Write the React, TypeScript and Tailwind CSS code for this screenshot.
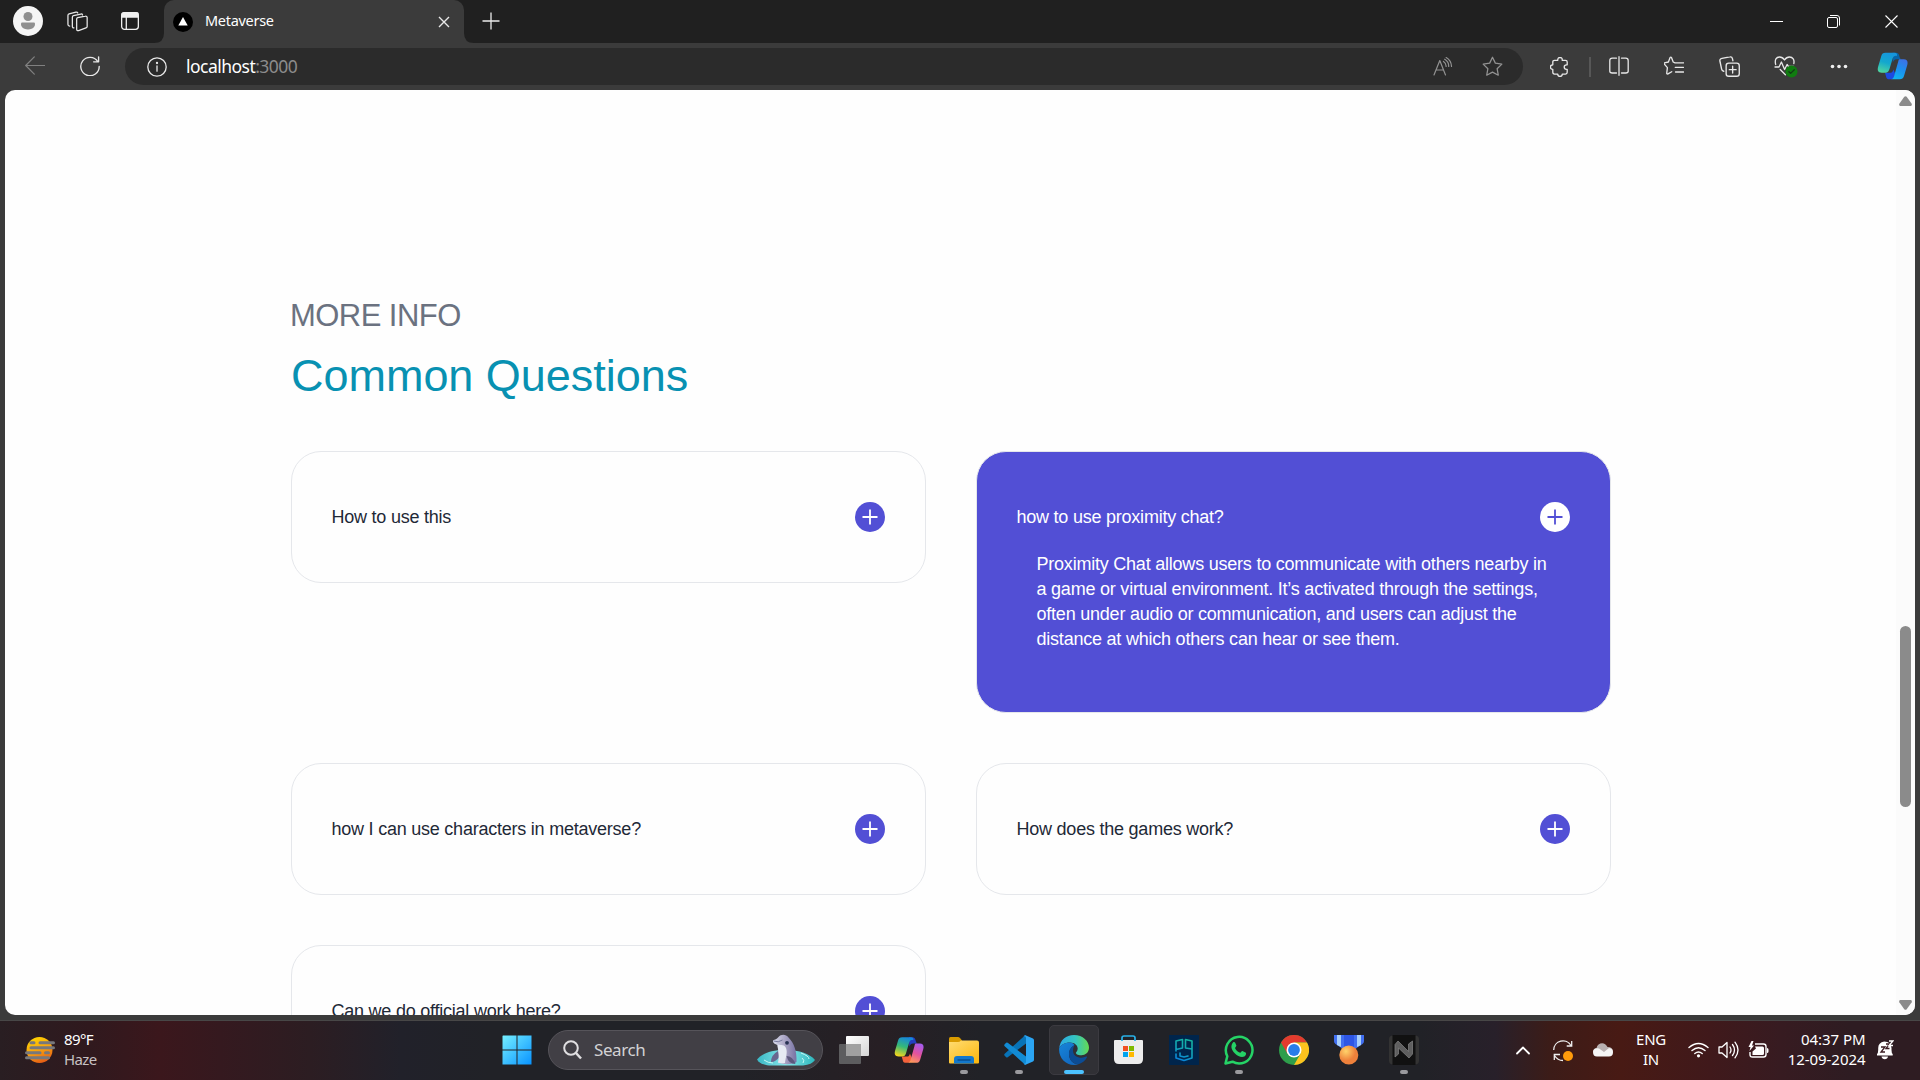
import type { ReactNode } from "react";

const faqs = [
  { question: "How to use this" },
  {
    question: "how to use proximity chat?",
    answer: [
      "Proximity Chat allows users to communicate with others nearby in",
      "a game or virtual environment. It’s activated through the settings,",
      "often under audio or communication, and users can adjust the",
      "distance at which others can hear or see them.",
    ],
  },
  { question: "how I can use characters in metaverse?" },
  { question: "How does the games work?" },
  { question: "Can we do official work here?" },
];

function Stroke({ size = 20, width = 1.3, children, className = "text-[#e8e8e8]" }: { size?: number; width?: number; children: ReactNode; className?: string }) {
  return (
    <svg width={size} height={size} viewBox="0 0 20 20" fill="none" stroke="currentColor" strokeWidth={width} strokeLinecap="round" strokeLinejoin="round" className={className}>
      {children}
    </svg>
  );
}

function TitleBar() {
  return (
    <header className="flex h-[43px] shrink-0 items-center bg-[#202020]">
      <div className="ml-[13px] mb-px flex h-[30px] w-[30px] items-center justify-center rounded-full bg-[#f5f5f5]">
        <svg width="16" height="18" viewBox="0 0 16 18" fill="#8f8f8f">
          <circle cx="8" cy="4.5" r="4.5" />
          <path d="M2.3 10.5h11.4c.9 0 1.3.7 1.3 1.5 0 3.2-2.6 5.4-7 5.4S1 15.200 1 12c0-.8.4-1.500 1.300-1.500Z" />
        </svg>
      </div>
      <div className="ml-[24px] mb-px">
        <Stroke size={21} width={1.2}>
          <path d="M10.200 6.300 17.500 4.900c.9-.2 1.700.4 1.700 1.300v8.500c0 .7-.4 1.200-1.100 1.400L11 18.700c-1 .3-1.800-.3-1.800-1.300V7.700c0-.7.4-1.200 1-1.400Z" />
          <path d="M6.600 16.100c-1 .1-1.500-.5-1.500-1.300V5.900c0-.7.4-1.200 1.100-1.400l7-1.600c.8-.2 1.400.2 1.600.9" />
          <path d="M2.600 14.300C1.500 14.200.9 13.700.9 12.800V4.200c0-.7.4-1.200 1.100-1.400l6.500-1.700c.9-.2 1.500.1 1.800.8" />
        </Stroke>
      </div>
      <div className="ml-[33px] mb-px">
        <svg width="18" height="18" viewBox="0 0 18 18" fill="none" stroke="#f0f0f0" strokeWidth="1.300">
          <rect x=".65" y=".65" width="16.700" height="16.700" rx="2.800" />
          <path d="M1 1.800Q1 1 2 1h14q1 0 1 .8V5H1Z" fill="#f0f0f0" />
          <path d="M5.300 5v12" />
        </svg>
      </div>
      <div className="relative ml-[25px] flex h-[43px] w-[300px] items-center rounded-t-[10px] bg-[#3b3b3b]">
        <svg className="absolute bottom-0 -left-[10px]" width="10" height="10" fill="#3b3b3b"><path d="M10 0v10H0Q10 10 10 0Z" /></svg>
        <svg className="absolute -right-[10px] bottom-0" width="10" height="10" fill="#3b3b3b"><path d="M0 0v10h10Q0 10 0 0Z" /></svg>
        <svg className="ml-[9px]" width="20" height="20" viewBox="0 0 20 20"><circle cx="10" cy="10" r="10" fill="#000" /><path d="m10 5 4.700 8.400H5.300Z" fill="#fff" /></svg>
        <span className="mb-[2px] ml-[12px] text-[14.500px] tracking-[-0.300px] text-white">Metaverse</span>
        <svg className="ml-auto mr-[14px]" width="12" height="12" stroke="#e8e8e8" strokeWidth="1.400"><path d="m1 1 10 10M11 1 1 11" /></svg>
      </div>
      <svg className="mb-[2px] ml-[18px]" width="18" height="18" stroke="#ececec" strokeWidth="1.300"><path d="M9 .5v17M.5 9h17" /></svg>
      <div className="ml-auto flex items-center">
        <div className="flex w-[57px] justify-center"><div className="h-px w-[13px] bg-white" /></div>
        <div className="flex w-[57px] justify-center">
          <svg width="13" height="13" fill="none" stroke="#fff" strokeWidth="1"><rect x=".5" y="2.500" width="10" height="10" rx="1.500" /><path d="M3 .5h7q2.500 0 2.500 2.500v7.500" /></svg>
        </div>
        <div className="flex w-[58px] justify-center"><svg width="13" height="13" stroke="#fff" strokeWidth="1.100"><path d="m.5.5 12 12m0-12-12 12" /></svg></div>
      </div>
    </header>
  );
}

function ToolButton({ children }: { children: ReactNode }) {
  return <div className="flex w-[55px] shrink-0 items-center justify-center">{children}</div>;
}

function Toolbar() {
  return (
    <div className="flex h-[47px] shrink-0 items-center bg-[#3b3b3b]">
      <div className="mb-px ml-[7px] flex">
        <ToolButton><Stroke width={1.200} className="text-[#808080]"><path d="M19.500 9.500H.7M9.300.9.700 9.500l8.600 8.600" /></Stroke></ToolButton>
        <ToolButton>
          <Stroke size={20} width={1.350}><path d="M17.700 5.500A9.200 9.200 0 1 0 19.200 10.500M18.600.8v5h-5" /></Stroke>
        </ToolButton>
      </div>
      <div className="ml-[8px] flex h-[37px] w-[1398px] shrink-0 items-center rounded-full bg-[#2b2b2b]">
        <div className="ml-[22px]"><Stroke size={20} width={1.300}><circle cx="10" cy="10" r="9.200" /><path d="M10 9v5.200" /><circle cx="10" cy="6" r=".5" fill="currentColor" /></Stroke></div>
        <span className="ml-[19px] text-[17.500px] tracking-[-0.530px] text-white">localhost<span className="text-[#8c8c8c]">:3000</span></span>
        <div className="ml-auto mr-[20px] flex items-center gap-[29px]">
          <Stroke size={20} width={1.200} className="text-[#929292]"><path d="M1 18 6.800 3.500 12.500 18M3 13h7.600M10.500 4.400q2.800 1.900 2.600 5M11.700 2.200q4.200 2.500 4 7.200M13.200.6q5 2.800 5.300 8.800" /></Stroke>
          <Stroke size={21} width={1.200} className="text-[#929292]"><path d="m10 1.200 2.700 5.600 6.200.9-4.500 4.400 1.100 6.200-5.500-2.900-5.500 2.900 1.100-6.200L1.100 7.700l6.200-.9Z" /></Stroke>
        </div>
      </div>
      <div className="ml-[9px]">
        <ToolButton>
          <Stroke size={20} width={1.300}><path d="M4.500 3.300h3.300c-.2-1.900.8-2.800 2.200-2.800s2.500.9 2.200 2.800h3.300q1.700 0 1.700 1.700v2.800h-.7c-1.500 0-2.300 1-2.300 2.200s.8 2.300 2.300 2.300h.7v3q0 1.800-1.700 1.800h-3.200c0 1.500-.8 2.400-2.300 2.400s-2.300-.9-2.300-2.400H4.500q-1.700 0-1.700-1.800v-3H2.600C1 12.300.4 11.300.4 10s.8-2.200 2.400-2.200V5q0-1.700 1.700-1.700Z" /></Stroke>
        </ToolButton>
      </div>
      <div className="ml-[2px] h-[20px] w-[2px] bg-[#575757]" />
      <div className="mb-px ml-[0.500px] flex">
        <ToolButton><Stroke width={1.300}><path d="M7.500 2.200H3.300Q.8 2.200.8 4.700v10.600q0 1.700 2.500 1.700h4.200M12.500 2.200h4.200q2.500 0 2.500 2.500v10.600q0 1.700-2.500 1.700h-4.200M10 .7v18.600" /></Stroke></ToolButton>
        <ToolButton><Stroke width={1.300}><path d="M11 6.800 9.200 6 7.500 1.500a.8.800 0 0 0-1.400 0L4.400 6l-4 .9q-.8.500 0 1.300l3 3.400-.7 5.700q.3 1 1.300.6l3.700-2.200M11 6.800h8.500M11.300 11.400h8.200M11.500 16h8" /></Stroke></ToolButton>
        <ToolButton><Stroke size={21} width={1.300}><rect x="6.800" y="6.800" width="12.500" height="12.500" rx="2.500" /><path d="M13 9.800v6.500M9.800 13h6.500M13.200 4.500l-.4-2c-.3-1.300-1.200-1.900-2.500-1.600l-7.500 1.400C1.200 2.600.6 3.500.9 5l1.600 7.500c.2 1.100.8 1.700 2 2" /></Stroke></ToolButton>
        <ToolButton>
          <svg className="mt-[2px] ml-[3px]" width="24" height="22" viewBox="0 0 24 22" fill="none" stroke="#e8e8e8" strokeWidth="1.300" strokeLinecap="round" strokeLinejoin="round">
            <path d="M1.700 8.500C.4 3.600 2.300 1 5.600 1c2.200 0 3.700 1.200 4.900 3 1.200-1.800 2.800-3 5-3 3.300 0 5.200 2.800 4.300 6.500M1 11h4l2.400-5 3.200 7.500 2.500-5 1.300 1.800h5.100M6.200 13.500l5.200 5.200" />
            <circle cx="17.500" cy="15.500" r="6" fill="#107c10" stroke="none" /><path d="m14.900 15.700 1.700 1.700 3.700-3.700" stroke="#123b15" />
          </svg>
        </ToolButton>
        <ToolButton><svg width="18" height="5" fill="#eee"><circle cx="2.500" cy="2.500" r="1.800" /><circle cx="9" cy="2.500" r="1.800" /><circle cx="15.500" cy="2.500" r="1.800" /></svg></ToolButton>
      </div>
      <div className="mb-px ml-[10px]"><CopilotMark blue /></div>
    </div>
  );
}

function CopilotMark({ blue = false }: { blue?: boolean }) {
  const id = blue ? "cpb" : "cpm";
  const top = blue ? ["#1695dc", "#13a8ce", "#4ed4a0"] : ["#1686dd", "#35b978", "#f2d51d"];
  const bottom = blue ? ["#3c72e6", "#1b91ef", "#12b5ed"] : ["#a65bed", "#e3529d", "#ff9b57"];
  return (
    <svg width="31" height="28" viewBox="0 0 31 28">
      <defs>
        <linearGradient id={id + "a"} x1=".6" y1="0" x2=".3" y2="1"><stop stopColor={top[0]} /><stop offset=".5" stopColor={top[1]} /><stop offset="1" stopColor={top[2]} /></linearGradient>
        <linearGradient id={id + "b"} x1=".7" y1="0" x2=".3" y2="1"><stop stopColor={bottom[0]} /><stop offset=".5" stopColor={bottom[1]} /><stop offset="1" stopColor={bottom[2]} /></linearGradient>
      </defs>
      <path d="M15.500.7h3.400c2.600 0 2.900 1.400 3.700 4.200.4 1.600 1 2.400 3 2.400h-5.800c-2.500 0-3.300 1.300-4 3.400Z" fill={blue ? "#0865a8" : "#233fc0"} />
      <path d="M8 20.700h5.500c1.800 0 2.400-1.200 3-3.200l1.900 4.800c-.8 3.100-1.700 5-4 5h-2.200c-2.800 0-2.800-1.600-3.500-4-.3-1.200-.6-2.200-.7-2.600Z" fill={blue ? "#1c4be0" : "#f4623b"} />
      <path d="M8.500.7h8.900c2.500 0 3 1.700 2.500 3.300-.7-.6-3.300-.7-4.200 2.300l-3.200 10.800c-.7 2.500-1.800 3.600-4.200 3.600H4.700c-3.700 0-4.500-2.400-3.600-5.900L4.300 4C4.900 1.800 6 .7 8.500.7Z" fill={`url(#${id}a)`} />
      <path d="M22.400 7.300h4.300c3.700 0 4.400 2.600 3.500 5.900L27 24c-.7 2.200-2 3.300-4.300 3.300h-8.900c2.100-.1 2.800-1.300 3.500-3.700l3.800-13.500c.5-1.700.5-2.800 1.300-2.800Z" fill={`url(#${id}b)`} />
    </svg>
  );
}

function FaqCard({ question, answer }: { question: string; answer?: string[] }) {
  const open = Boolean(answer);
  return (
    <article className={`rounded-[30px] border border-[#e5e7eb] py-[50px] pr-[40px] pl-[39.500px] text-[18px] leading-[25px] tracking-[-0.230px] ${open ? "bg-[#524fd5] text-white" : "text-[#1f2937]"}`}>
      <div className="flex h-[30px] items-center justify-between">
        <h3>{question}</h3>
        <span className={`flex h-[30px] w-[30px] items-center justify-center rounded-full ${open ? "bg-white text-[#524fd5]" : "bg-[#524fd5] text-white"}`}>
          <svg width="16" height="16" stroke="currentColor" strokeWidth="1.800"><path d="M8 .5v15M.5 8h15" /></svg>
        </span>
      </div>
      {answer && <p className="mt-[20px] mb-[10px] ml-[20px] whitespace-nowrap tracking-[-0.220px]">{answer.map((line) => <span key={line} className="block">{line}</span>)}</p>}
    </article>
  );
}

function Page() {
  return (
    <main className="mx-[5px] flex h-[925px] shrink-0 overflow-hidden rounded-[10px] bg-[#fefefe] font-['Liberation_Sans',Arial,sans-serif]">
      <section className="ml-[286px] mr-[285px] w-[1320px] shrink-0 pt-[203px]">
        <p className="-ml-px text-[31px] leading-[45px] tracking-[-0.550px] text-[#6b7280]">MORE INFO</p>
        <h2 className="mt-[4px] text-[45px] leading-[68px] tracking-[-0.030px] text-[#0891b2]">Common Questions</h2>
        <div className="mt-[41px] grid grid-cols-2 items-start gap-[50px]">
          {faqs.map((faq) => <FaqCard key={faq.question} {...faq} />)}
        </div>
      </section>
      <aside className="flex w-[19px] shrink-0 flex-col items-center bg-[#fbfbfb] pt-[6px] pb-[5px]">
        <svg width="13" height="10" fill="#8b8b8b"><path d="M5.300.8q1.200-1.200 2.400 0l5 7q.6 1.700-.9 2.200H1.200Q-.3 9.500.3 7.800Z" /></svg>
        <div className="mt-[520px] h-[181px] w-[11px] rounded-full bg-[#8b8b8b]" />
        <svg className="mt-auto" width="13" height="10" fill="#8b8b8b"><path d="M5.300 9.200q1.200 1.200 2.400 0l5-7Q13.300.5 11.800 0H1.200Q-.3.500.3 2.200Z" /></svg>
      </aside>
    </main>
  );
}

function Dolphin() {
  return (
    <svg width="58" height="32" viewBox="0 0 58 32">
      <defs>
        <linearGradient id="dol" x1="0" x2="1"><stop stopColor="#dadcec" /><stop offset=".5" stopColor="#aaa5c4" /><stop offset="1" stopColor="#7671a3" /></linearGradient>
        <linearGradient id="water" x1="0" x2="1"><stop stopColor="#39b8c5" /><stop offset=".5" stopColor="#8ae7ea" /><stop offset="1" stopColor="#2cb7bd" /></linearGradient>
      </defs>
      <path d="M0 25.500C5 19.500 14 16 28 16c15 0 25 4 30 10-2 3-6 5-12 5.500H12C6 31 2 29 0 25.500Z" fill="url(#water)" />
      <path d="M44 19q8 3 8 6m-7-1q3 2 1 5M7 26q4 3 9 3" stroke="#c6f8f5" fill="none" />
      <path d="M21 17q-7 4-7 11 5 0 9-6Z" fill="#68668f" />
      <path d="M16 6.500c2-1.200 4-1.200 5.500-3.500C24 0 29 0 31.500 3.500 37 9 40 17 39.500 28c-3 2.500-13 3-18.500.5 2-6-.5-14-.5-17.500-2-.8-5-2-4.500-4.500Z" fill="url(#dol)" />
      <path d="M20.500 10.500c4 1 7 0 8.500 3.500 2 5-1 11-1 15-3 .5-5 .4-7-.5 2-6 0-13-.5-18Z" fill="#e6eaf3" />
      <path d="M29.500 22q6 0 9 8-7 0-9-8Z" fill="#5c587d" /><circle cx="30" cy="8.800" r="1.900" fill="#273152" />
      <path d="M16.500 7q5 2 9-1" stroke="#77799c" fill="none" />
    </svg>
  );
}

function TaskIcon({ children, state }: { children: ReactNode; state?: "open" | "active" }) {
  return (
    <div className="flex h-[59px] w-[55px] shrink-0 flex-col items-center pt-[4px]">
      <div className={`flex h-[50px] w-[50px] flex-col items-center rounded-[5px] border pt-[9px] ${state === "active" ? "border-[#3b3a40] bg-[#303035]" : "border-transparent"}`}>
        <div className="flex h-[30px] w-[30px] items-center justify-center">{children}</div>
        {state && <span className={`mt-[5px] h-[4px] shrink-0 rounded-full ${state === "active" ? "w-[20px] bg-[#4cc2ff]" : "w-[8px] bg-[#9a9a9e]"}`} />}
      </div>
    </div>
  );
}

function TaskIcons() {
  return (
    <div className="ml-[3px] flex">
      <TaskIcon>
        <svg width="30" height="28"><defs><linearGradient id="tv" x2="1" y2="1"><stop stopColor="#fff" /><stop offset="1" stopColor="#d5d5d5" /></linearGradient></defs><rect x="7" width="23" height="20" rx="1" fill="url(#tv)" /><rect y="8" width="22" height="20" rx="1" fill="#5d5d5f" /><path d="M7 8h15v12H7Z" fill="#a0a0a0" /></svg>
      </TaskIcon>
      <TaskIcon><CopilotMark /></TaskIcon>
      <TaskIcon state="open">
        <svg width="30" height="27" viewBox="0 0 30 27"><defs><linearGradient id="fold" x2=".8" y2="1"><stop stopColor="#ffdc72" /><stop offset="1" stopColor="#fbb913" /></linearGradient></defs><path d="M0 1.500Q0 0 1.500 0H9q1 0 2 1l2 2.500V8H0Z" fill="#d99b00" /><path d="M0 5h9q1.500 0 3-1.500h16q2 0 2 2v20q0 1-1 1H1q-1 0-1-1Z" fill="url(#fold)" /><path d="M5 26.500V22q0-3 3-3h14q3 0 3 3v4.500Z" fill="#1378cc" /><path d="M9 23h12" stroke="#084f91" strokeWidth="1.300" strokeLinecap="round" /></svg>
      </TaskIcon>
      <TaskIcon state="open">
        <svg width="30" height="30" viewBox="0 0 30 30"><path d="M.7 18.800 19.500 1.700Q21 0 22 .5v8L3.700 22.200q-.8.600-1.500 0l-1.500-1.500q-1-.9 0-1.900Z" fill="#0873b7" /><path d="M.7 11.200 19.500 28.300Q21 30 22 29.500v-8L3.700 7.800q-.8-.6-1.500 0L.7 9.300q-1 .9 0 1.900Z" fill="#128bd4" /><path d="M22 .4 29 3.600q1 .5 1 1.600v19.600q0 1.100-1 1.600l-7 3.200q-1.500.5-2.500-1.200 2.500.9 2.500-1.700V3.300Q22 .7 19.500 1.600 20.500 0 22 .4Z" fill="#2ba5f3" /></svg>
      </TaskIcon>
      <TaskIcon state="active">
        <svg width="30" height="30" viewBox="0 0 30 30">
          <defs><linearGradient id="eg" x2="1"><stop stopColor="#2aa9e7" /><stop offset=".55" stopColor="#35c5c0" /><stop offset="1" stopColor="#65db52" /></linearGradient><linearGradient id="eb" x2=".7" y2="1"><stop stopColor="#1685da" /><stop offset="1" stopColor="#1267bd" /></linearGradient></defs>
          <path d="M.2 13C1.200 5 7 0 15 0c9 0 15 6.300 15 12.600 0 5-3.800 7.700-7.500 7.700-4.300 0-5.600-1.500-5.600-2.500 0-.8 1.800-1.500 1.800-4.300 0-3-3-6-7.700-6C5.500 7.500 1.600 10 .2 13Z" fill="url(#eg)" />
          <path d="M11 7.500C5.500 7.500 1.600 10 .2 13-.8 22 6 30 15 30c1.600 0 3-.2 4.500-.7C14 29 10 25 10 19c0-4.500 3-7.500 5.500-9-1-1.600-2.500-2.500-4.500-2.500Z" fill="url(#eb)" />
          <path d="M15.500 10C12.500 11.500 10 14.500 10 19c0 6 4.500 10.300 9.500 10.300 4-1.300 7-4 8.500-7 .3-.7-.2-1-.8-.7-5.200 2.600-13.200.5-13.200-6.200 0-2 .8-3.800 1.500-5.400Z" fill="#0c4c94" />
        </svg>
      </TaskIcon>
      <TaskIcon>
        <svg width="29" height="30" viewBox="0 0 29 30"><path d="M0 6q0-1 1-1h27q1 0 1 1v18q0 5-5 5H5q-5 0-5-5Z" fill="#ededed" /><path d="M8 6V3q0-2 2-2h9q2 0 2 2v3" fill="none" stroke="#28b1e8" strokeWidth="1.700" /><path d="M9 11h5v5H9Z" fill="#f25022" /><path d="M15 11h5v5h-5Z" fill="#7fba00" /><path d="M9 17h5v5H9Z" fill="#00a4ef" /><path d="M15 17h5v5h-5Z" fill="#ffb900" /></svg>
      </TaskIcon>
      <TaskIcon>
        <svg width="30" height="30" viewBox="0 0 30 30" fill="none" strokeWidth="1.600" strokeLinejoin="round" strokeLinecap="round"><defs><linearGradient id="pg" gradientUnits="userSpaceOnUse" x1="20" y1="3" x2="9" y2="26"><stop stopColor="#15b69d" /><stop offset=".55" stopColor="#12a4bb" /><stop offset="1" stopColor="#087edf" /></linearGradient></defs><path fill="#00254c" d="M0 0h30v30H0Z" /><path stroke="url(#pg)" d="M7 16V6l6.500-1.500v8.500L7 14.500M23 14l-6.500-1V4.500L23 6v17l-8 2.500L7 23v-4M11 18v3l4 1 4-1" /></svg>
      </TaskIcon>
      <TaskIcon state="open">
        <svg width="30" height="30" viewBox="0 0 30 30"><path d="M1.500 28.500 3.300 21.200A13.300 13.300 0 1 1 8.500 26.700Z" fill="none" stroke="#25d366" strokeWidth="2.500" strokeLinejoin="round" /><path d="M9 7.500c.8-.8 1.800-.6 2.200.3l1.200 2.800c.3.700-1.400 2-1.300 2.700.9 2 2.700 3.700 5 4.500.7.200 1.600-2 2.400-1.700l3 1.400c1.300.6.500 4.500-3.400 4.500-4.700 0-10.700-5.900-10.700-10 0-2 .9-3.800 1.600-4.500Z" fill="#25d366" /></svg>
      </TaskIcon>
      <TaskIcon>
        <svg width="30" height="30" viewBox="0 0 30 30"><circle cx="15" cy="15" r="15" fill="#2e9e4b" /><path d="M2 7.500A15 15 0 0 1 28 7.500H15v8Z" fill="#e33b2e" /><path d="M2 7.500 8.500 18.700 15 15 15 7.500Z" fill="#e33b2e" /><path d="M15 7.500h13A15 15 0 0 1 15 30l6.500-11.200Z" fill="#fcc31e" /><circle cx="15" cy="15" r="7.500" fill="#fff" /><circle cx="15" cy="15" r="5.900" fill="#287de9" /></svg>
      </TaskIcon>
      <TaskIcon>
        <svg width="30" height="30" viewBox="0 0 30 30"><defs><radialGradient id="gold" cx=".35" cy=".3"><stop stopColor="#ffd36b" /><stop offset="1" stopColor="#ee813b" /></radialGradient></defs><path d="M0 0h30v6q0 2-1.500 3L21 14H9L1.500 9Q0 8 0 6Z" fill="#416ff1" /><path d="M3 0h4v12L3 10ZM23 0h4v10l-4 2Z" fill="#a9d0fb" /><path d="M10 0h10v12H10Z" fill="#2e56e5" /><circle cx="14.800" cy="20" r="9.500" fill="url(#gold)" /></svg>
      </TaskIcon>
      <TaskIcon state="open">
        <svg width="30" height="30" viewBox="0 0 30 30"><rect y=".5" width="30" height="29" rx="4" fill="#333" /><path d="M3.500 0h23v30h-23Z" fill="#111" /><path d="M6 22V9.500L9 6l10.500 10.500V9l4-3v13l-3.500 4L9.500 13v6Z" fill="#5f5f5f" stroke="#858585" strokeWidth=".7" /></svg>
      </TaskIcon>
    </div>
  );
}

function Tray() {
  return (
    <div className="ml-auto flex h-[59px] items-center text-white">
      <svg width="14" height="9" fill="none" stroke="#fff" strokeWidth="1.800" strokeLinecap="round" strokeLinejoin="round"><path d="m1 7.500 6-6 6 6" /></svg>
      <svg className="ml-[23px]" width="20" height="22" viewBox="0 0 20 22" fill="none" stroke="#eee" strokeWidth="1.300"><path d="M.7 10A9.300 9.300 0 0 1 18 5.500M18.700 1v5h-5M1.300 20v-5.500H7M1.500 15.500q3 5 8.500 5" /><circle cx="15" cy="16" r="5" fill="#ff9b0b" stroke="none" /></svg>
      <svg className="mb-px ml-[20px]" width="20" height="14" viewBox="0 0 20 14"><path d="M0 9c0-2.500 1.700-4 3.500-4C4.500-.5 12-2 14.500 4q5.500 0 5.500 5Z" fill="#b9b1b2" /><path d="M0 9c0-3 4.500-5 7.500-2.500L11 9l5-4q4 .3 4 4.500t-4.500 4H4Q0 13.500 0 9Z" fill="#f5f5f5" /></svg>
      <div className="mb-[3px] ml-[23px] w-[30px] text-center text-[15px] leading-[20px] tracking-[-0.300px]">ENG<br />IN</div>
      <svg className="mb-[2px] ml-[21.500px]" width="21" height="16" viewBox="0 0 21 16" fill="none" stroke="#fff" strokeWidth="1.400" strokeLinecap="round"><path d="M1 5.500q9.500-8 19 0M4 8.500q6.500-5.500 13 0M6.800 11.500q3.700-3 7.400 0" /><circle cx="10.500" cy="13.800" r="1.600" fill="#fff" stroke="none" /></svg>
      <svg className="mb-[2px] ml-[9px]" width="21" height="18" viewBox="0 0 21 18" fill="none" stroke="#fff" strokeWidth="1.300" strokeLinecap="round" strokeLinejoin="round"><path d="M1 6h3l5-4.500v15L4 12H1Z" /><path d="M12 6q2 3 0 6M14.500 3.500q4 5.500 0 11M17 1.200q6 7.800 0 15.600" /></svg>
      <svg className="mb-[3px] ml-[9px]" width="21" height="17" viewBox="0 0 21 17"><path d="M7 3h8.500Q18 3 18 5.500v8q0 2.500-2.500 2.500h-11Q2 16 2 13.500V11" fill="none" stroke="#fff" strokeWidth="1.400" /><path d="M7 5.500h7.500q1.500 0 1.500 1.500v5.500q0 1.500-1.500 1.500H4.500v-3.500L8 7.500ZM19 7q1.500 0 1.500 1.500V10.500Q20.500 12 19 12ZM3.500 0 .5 6h2L1.500 10 6 4.500H4L5.500 0Z" fill="#fff" /></svg>
      <div className="mb-[4px] ml-[15px] w-[82px] text-right text-[15px] leading-[20px] tracking-[-0.050px] whitespace-nowrap">04:37 PM<br />12-09-2024</div>
      <svg className="mr-[26px] mb-px ml-[10.500px]" width="18" height="20" viewBox="0 0 18 20"><path d="M1 15.500V14q1.200-1 1.200-4V8q0-5.500 6-6.500 7 0 7.300 6.500v2q0 3 1.200 4v1.500ZM5.500 16.500h6.500q-.5 2.800-3.200 2.800t-3.300-2.800Z" fill="#fff" /><path d="M5 7h4l-4 5h4M10 4h3.500L10 8.500h3.500" fill="none" stroke="#3a1b21" strokeWidth="1.300" /><path d="M13 1h4l-4 4.500h4" fill="none" stroke="#fff" strokeWidth="1.300" /></svg>
    </div>
  );
}

function Taskbar() {
  return (
    <footer className="flex h-[60px] shrink-0 border-t border-[#484747] bg-[linear-gradient(90deg,#291e22_0px,#30191e_90px,#3b171c_160px,#35191f_220px,#2c1d22_310px,#21212a_400px,#212227_490px,#212227_740px,#271f24_880px,#212227_980px,#212227_1420px,#28202a_1495px,#3c1c18_1550px,#481a14_1620px,#40191b_1710px,#371b21_1780px,#2e1c22_1850px,#2e1c22_1920px)] font-['Noto_Sans','Open_Sans',sans-serif]">
      <div className="flex h-[59px] w-[502px] items-center pl-[25px]">
        <svg className="mb-[2px]" width="30" height="26" viewBox="0 0 30 26"><defs><linearGradient id="sun" x1=".3" x2=".7" y2="1"><stop stopColor="#ffd400" /><stop offset=".5" stopColor="#f7a00f" /><stop offset="1" stopColor="#e45716" /></linearGradient></defs><circle cx="14.500" cy="13" r="13" fill="url(#sun)" /><path d="M6 5.700h3M15 5.700h13.500M6 10.700h22.500M1.500 15.700H15M20.500 15.700h3M1.500 20.700h22" stroke="#77787c" strokeWidth="3" strokeLinecap="round" /></svg>
        <div className="mb-[4px] ml-[9px] text-[15px] leading-[20px] tracking-[-0.600px] text-white">89°F<br /><span className="text-[#c7c1c3]">Haze</span></div>
      </div>
      <div className="flex h-[59px] w-[46px] items-center">
        <svg className="mb-px" width="30" height="30" viewBox="0 0 30 30"><defs><linearGradient id="win" x2="1" y2="1"><stop stopColor="#75efff" /><stop offset="1" stopColor="#0893ff" /></linearGradient></defs><path d="M1 .5h13.500v14H.500V1ZM15.500.5h14v14h-14ZM.5 15.500h14v14H.5ZM15.500 15.500h14v14h-14Z" fill="url(#win)" /></svg>
      </div>
      <div className="mt-[9px] flex h-[40px] w-[275px] shrink-0 items-center rounded-full border border-[#56545a] bg-[#413f45]">
        <svg className="ml-[14px]" width="19" height="20" fill="none" stroke="#e0dfe1" strokeWidth="2"><circle cx="8" cy="8" r="6.800" /><path d="m13 13 5 5.500" strokeWidth="2.500" /></svg>
        <span className="ml-[12px] text-[17px] tracking-[-0.400px] text-[#d3d2d4]">Search</span>
        <div className="mr-[7px] ml-auto"><Dolphin /></div>
      </div>
      <TaskIcons />
      <Tray />
    </footer>
  );
}

export default function App() {
  return (
    <div className="flex h-[1080px] w-[1920px] flex-col overflow-hidden bg-[#3b3b3b] font-['Noto_Sans','Open_Sans',sans-serif]">
      <TitleBar />
      <Toolbar />
      <Page />
      <div className="h-[5px] shrink-0" />
      <Taskbar />
    </div>
  );
}
